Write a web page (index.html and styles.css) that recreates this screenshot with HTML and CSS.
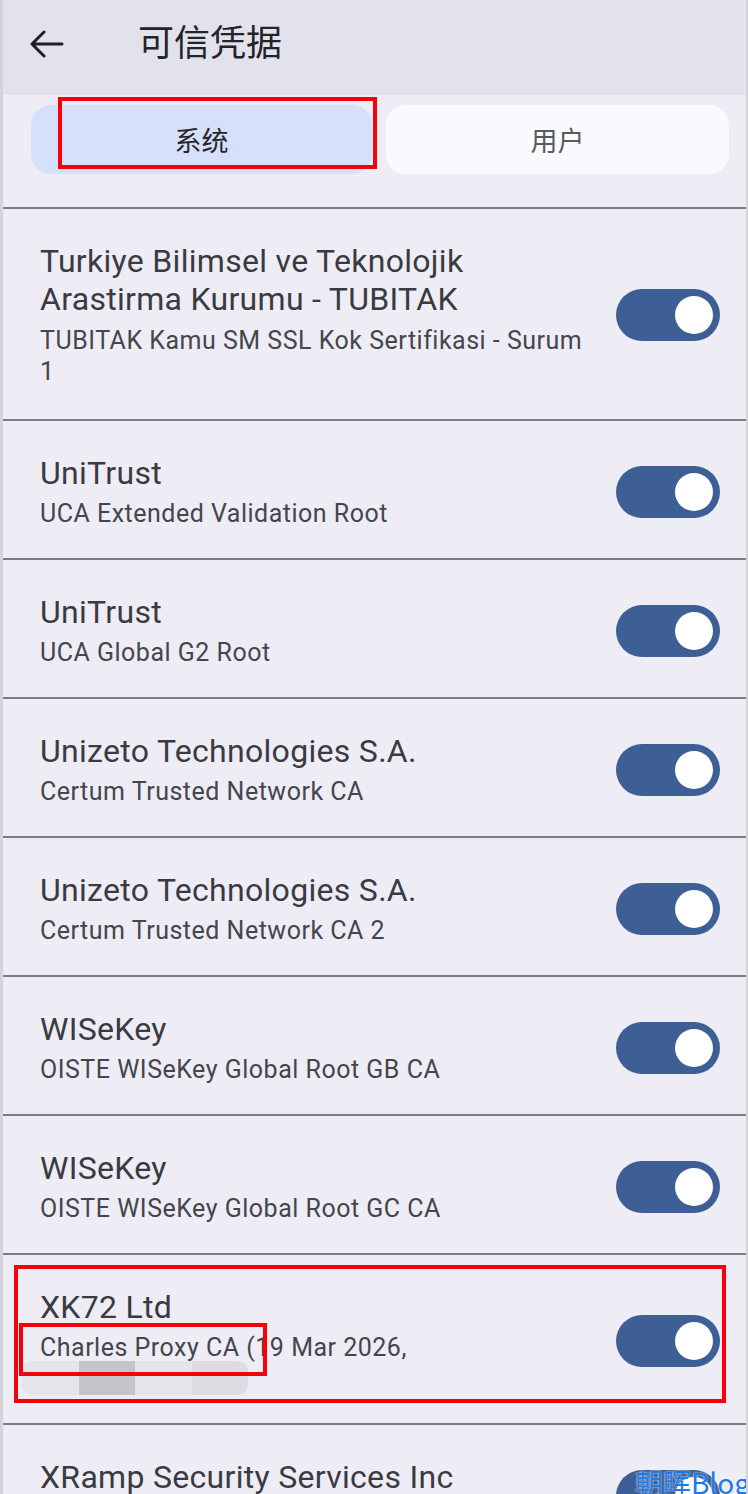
FILE: index.html
```html
<!DOCTYPE html>
<html lang="zh-CN">
<head>
  <meta charset="UTF-8" />
  <meta name="viewport" content="width=device-width, initial-scale=1.0"/>
  <title>可信凭据</title>
  <link rel="stylesheet" href="styles.css">
</head>
<body>
  <div class="screen">
    <header class="appbar">
      <svg class="back" width="34" height="28" viewBox="0 0 34 28">
        <path d="M14 2 L2 14 L14 26 M2 14 H32" fill="none" stroke="#1f1f24" stroke-width="3" stroke-linecap="round" stroke-linejoin="round"/>
      </svg>
      <h1>可信凭据</h1>
    </header>

    <div class="tabs">
      <div class="tab active">系统<span class="mark mark-tab"></span></div>
      <div class="tab">用户</div>
    </div>

    <ul class="cert-list">
      <li class="cert">
        <div class="info">
          <p class="name">Turkiye Bilimsel ve Teknolojik Arastirma Kurumu - TUBITAK</p>
          <p class="sub">TUBITAK Kamu SM SSL Kok Sertifikasi - Surum 1</p>
        </div>
        <span class="toggle"></span>
      </li>
      <li class="cert">
        <div class="info">
          <p class="name">UniTrust</p>
          <p class="sub">UCA Extended Validation Root</p>
        </div>
        <span class="toggle"></span>
      </li>
      <li class="cert">
        <div class="info">
          <p class="name">UniTrust</p>
          <p class="sub">UCA Global G2 Root</p>
        </div>
        <span class="toggle"></span>
      </li>
      <li class="cert">
        <div class="info">
          <p class="name">Unizeto Technologies S.A.</p>
          <p class="sub">Certum Trusted Network CA</p>
        </div>
        <span class="toggle"></span>
      </li>
      <li class="cert">
        <div class="info">
          <p class="name">Unizeto Technologies S.A.</p>
          <p class="sub">Certum Trusted Network CA 2</p>
        </div>
        <span class="toggle"></span>
      </li>
      <li class="cert">
        <div class="info">
          <p class="name">WISeKey</p>
          <p class="sub">OISTE WISeKey Global Root GB CA</p>
        </div>
        <span class="toggle"></span>
      </li>
      <li class="cert">
        <div class="info">
          <p class="name">WISeKey</p>
          <p class="sub">OISTE WISeKey Global Root GC CA</p>
        </div>
        <span class="toggle"></span>
      </li>
      <li class="cert highlight">
        <div class="info">
          <p class="name">XK72 Ltd</p>
          <p class="sub">Charles Proxy CA (19 Mar 2026,</p>
          <div class="redacted">
            <span class="blk light"></span><span class="blk dark"></span><span class="blk light"></span><span class="blk mid"></span>
          </div>
        </div>
        <span class="toggle"></span>
        <span class="mark mark-row"></span>
        <span class="mark mark-sub"></span>
      </li>
      <li class="cert">
        <div class="info">
          <p class="name">XRamp Security Services Inc</p>
          <p class="sub">XRamp Global Certification Authority</p>
        </div>
        <span class="toggle"></span>
      </li>
    </ul>

    <div class="watermark">朝晖Blog</div>
  </div>
</body>
</html>
```

FILE: styles.css
```css
body {
  margin: 0;
  background: #eeedf5;
  font-family: Roboto, "Noto Sans CJK SC", sans-serif;
}
.screen {
  position: relative;
  width: 748px;
  height: 1494px;
  overflow: hidden;
  box-sizing: border-box;
  border-left: 3px solid #d3d3d8;
  border-right: 2px solid #d3d3d8;
  background: #eeedf5;
}
.appbar {
  height: 95px;
  background: #e2e2ec;
  display: flex;
  align-items: center;
  padding-left: 27px;
}
.back {
  display: block;
  margin-top: -8px;
}
.appbar h1 {
  margin: -16px 0 0 74px;
  font-family: "Noto Sans CJK SC", sans-serif;
  font-size: 36px;
  font-weight: 400;
  color: #232328;
}
.tabs {
  display: grid;
  grid-template-columns: 341px 343px;
  gap: 14px;
  padding: 10px 0 33px 28px;
}
.tab {
  position: relative;
  height: 69px;
  border-radius: 20px;
  background: #fafafe;
  display: flex;
  align-items: center;
  justify-content: center;
  font-family: "Noto Sans CJK SC", sans-serif;
  font-size: 27px;
  color: #5a5a60;
}
.tab.active {
  background: #d6e0fb;
  color: #26262c;
}
.mark {
  position: absolute;
  box-sizing: border-box;
  border: 4px solid #f5000b;
  pointer-events: none;
}
.mark-tab {
  left: 27px;
  top: -8px;
  width: 319px;
  height: 72px;
}
.cert-list {
  list-style: none;
  margin: 0;
  padding: 0;
}
.cert {
  position: relative;
  display: flex;
  align-items: center;
  gap: 20px;
  border-top: 2px solid #7c7c84;
  padding: 33px 26px 29px 37px;
}
.cert:first-child {
  padding-bottom: 32px;
}
.cert:first-child .sub {
  margin-top: 7px;
}
.info {
  flex: 1;
  min-width: 0;
}
.name {
  margin: 0;
  font-size: 32px;
  line-height: 38px;
  letter-spacing: 0.3px;
  color: #3a3a42;
}
.sub {
  margin: 6px 0 0;
  font-size: 25px;
  line-height: 31px;
  letter-spacing: 0.5px;
  color: #45454d;
}
.redacted {
  display: flex;
  width: 226px;
  height: 34px;
  margin: -2px 0 -1px -18px;
  border-radius: 10px;
  overflow: hidden;
  filter: blur(0.6px);
}
.blk {
  flex: 1;
}
.blk.light { background: #e4e4ea; }
.blk.dark { background: #c4c4ca; }
.blk.mid { background: #dcdce2; }
.mark-row {
  left: 11px;
  top: 10px;
  width: 712px;
  height: 138px;
}
.mark-sub {
  left: 16px;
  top: 68px;
  width: 248px;
  height: 53px;
}
.toggle {
  position: relative;
  flex: none;
  width: 104px;
  height: 52px;
  border-radius: 26px;
  background: #3e5f96;
}
.toggle::after {
  content: "";
  position: absolute;
  right: 7px;
  top: 7px;
  width: 38px;
  height: 38px;
  border-radius: 50%;
  background: #fff;
}
.watermark {
  position: absolute;
  right: -4px;
  bottom: -8px;
  font-family: "Noto Sans CJK SC", sans-serif;
  font-size: 28px;
  color: #1e7ae6;
  text-shadow: 0 0 2px #fff;
}
```
